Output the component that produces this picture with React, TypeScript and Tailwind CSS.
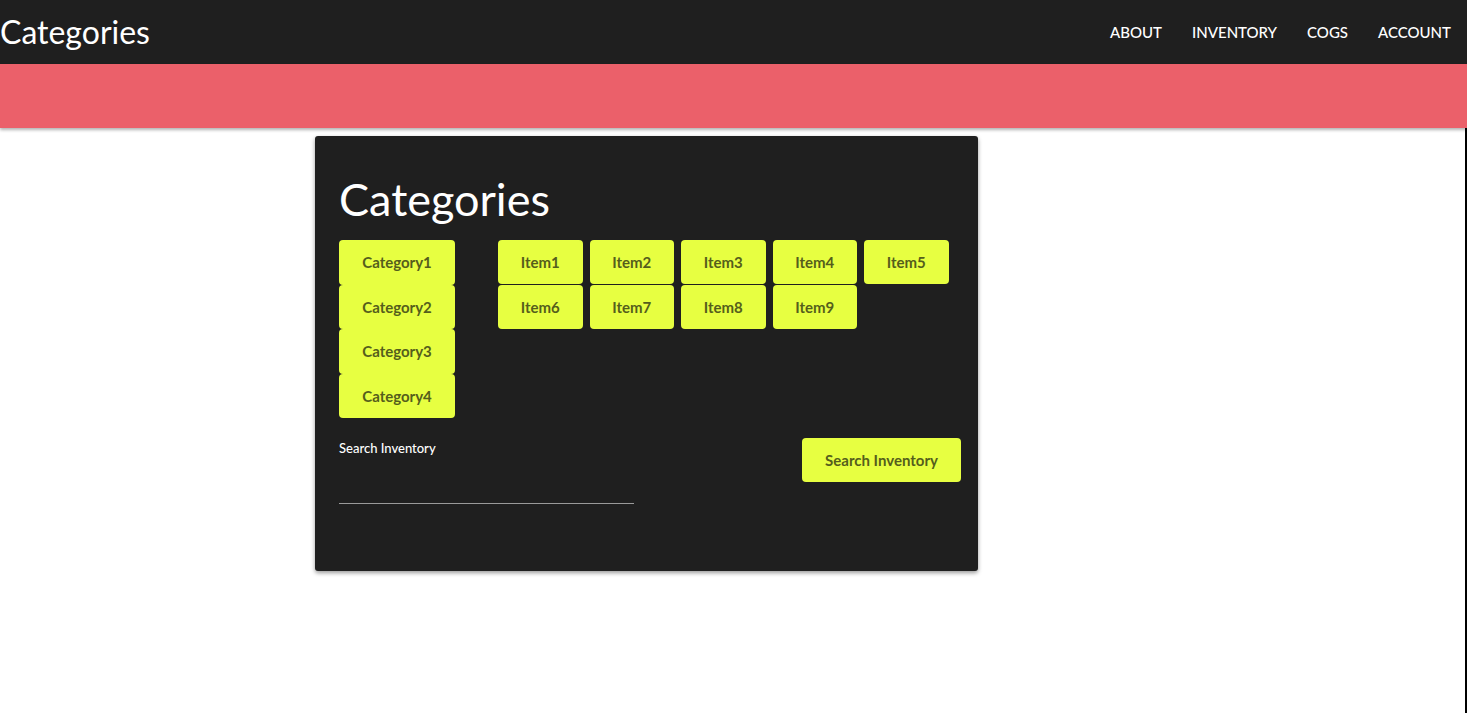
const categories = ['Category1', 'Category2', 'Category3', 'Category4']
const items = ['Item1', 'Item2', 'Item3', 'Item4', 'Item5', 'Item6', 'Item7', 'Item8', 'Item9']

const btn =
  'flex items-center justify-center rounded-[4px] bg-[#e7ff41] text-[15px] font-bold text-[#555e1c]'

export default function App() {
  return (
    <div className="min-h-[713px] flex flex-col bg-white font-['Lato',sans-serif]">
      <header className="h-16 bg-[#1f1f1f] flex items-center justify-between pr-4">
        <h1 className="text-[32px] leading-none text-white -mt-[1px]">Categories</h1>
        <nav className="flex items-center gap-[30px] text-[15px] font-medium text-white">
          <a>ABOUT</a>
          <a>INVENTORY</a>
          <a>COGS</a>
          <a>ACCOUNT</a>
        </nav>
      </header>
      <div className="h-16 bg-[#eb606a] shadow-[0_2px_3px_rgba(0,0,0,0.3)] relative z-10" />
      <main className="flex-1 border-r-2 border-black pt-2 pl-[315px]">
        <section className="w-[663px] h-[435px] bg-[#1f1f1f] rounded-[3px] shadow-[0_2px_4px_rgba(0,0,0,0.4)] pl-6 pr-[17px] pt-[32px]">
          <h2 className="text-[45px] leading-[62px] text-white">Categories</h2>
          <div className="flex mt-[10px]">
            <div className="flex flex-col w-[116px]">
              {categories.map((c) => (
                <div key={c} className={`${btn} h-[44.5px]`}>
                  {c}
                </div>
              ))}
            </div>
            <div className="ml-[43px] w-[460px] flex flex-wrap content-start gap-x-[7px] gap-y-[1px]">
              {items.map((i) => (
                <div key={i} className={`${btn} w-[84.5px] h-[44px]`}>
                  {i}
                </div>
              ))}
            </div>
          </div>
          <div className="flex justify-between mt-5">
            <div className="w-[295px] pt-[1px]">
              <label className="block text-[13px] font-medium text-white">Search Inventory</label>
              <div className="mt-[44px] border-b border-[#9a9a9a]" />
            </div>
            <button className={`${btn} w-[159px] h-11`}>Search Inventory</button>
          </div>
        </section>
      </main>
    </div>
  )
}
